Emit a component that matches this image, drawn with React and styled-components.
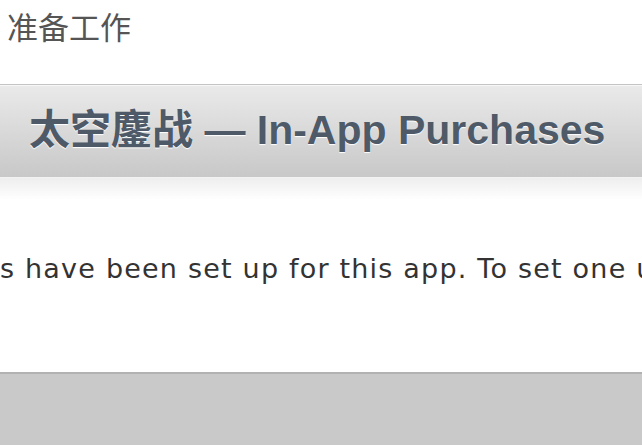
import React from "react";
import styled, { createGlobalStyle } from "styled-components";

const Global = createGlobalStyle`
  html, body { margin: 0; padding: 0; background: #fff; }
  body { width: 642px; height: 445px; overflow: hidden; }
  #root { height: 100%; }
`;

const Page = styled.div`
  display: flex;
  flex-direction: column;
  height: 445px;
  overflow: hidden;
`;

const PageTitle = styled.h1`
  margin: 0;
  padding: 7px 0 0 7px;
  height: 84px;
  flex: none;
  box-sizing: border-box;
  font-family: "Noto Sans CJK SC", "Liberation Sans", sans-serif;
  font-weight: 400;
  font-size: 31px;
  line-height: 38px;
  color: #555;
`;

const PanelHeader = styled.div`
  height: 94px;
  flex: none;
  box-sizing: border-box;
  border-top: 1px solid #c4c4c4;
  border-bottom: 1px solid #f2f2f2;
  box-shadow: inset 0 1px 0 #f7f7f7;
  background: linear-gradient(#eaeaea, #c8c8c8);
  display: flex;
  align-items: center;
  padding: 0 0 11px 29px;
`;

const PanelTitle = styled.h2`
  margin: 0;
  font-family: "Liberation Sans", "Noto Sans CJK SC", sans-serif;
  font-weight: 700;
  font-size: 41px;
  color: #4e5a68;
  text-shadow: 0 1px 1px #fff;
  white-space: nowrap;
`;

const PanelBody = styled.div`
  height: 194px;
  flex: none;
  box-sizing: border-box;
  background: linear-gradient(#eeeeee, #ffffff 22px, #ffffff);
  overflow: hidden;
  padding-top: 76px;
`;

const Message = styled.p`
  margin: 0;
  font-family: "DejaVu Sans", "Liberation Sans", sans-serif;
  font-size: 27px;
  letter-spacing: 1.2px;
  line-height: 30px;
  color: #333;
  white-space: nowrap;
`;

const Footer = styled.div`
  flex: 1;
  background: #c9c9c9;
  border-top: 2px solid #b2b2b2;
`;

export default function App() {
  return (
    <Page>
      <Global />
      <PageTitle>准备工作</PageTitle>
      <PanelHeader>
        <PanelTitle>太空鏖战 — In-App Purchases</PanelTitle>
      </PanelHeader>
      <PanelBody>
        <Message>s have been set up for this app. To set one u</Message>
      </PanelBody>
      <Footer />
    </Page>
  );
}
